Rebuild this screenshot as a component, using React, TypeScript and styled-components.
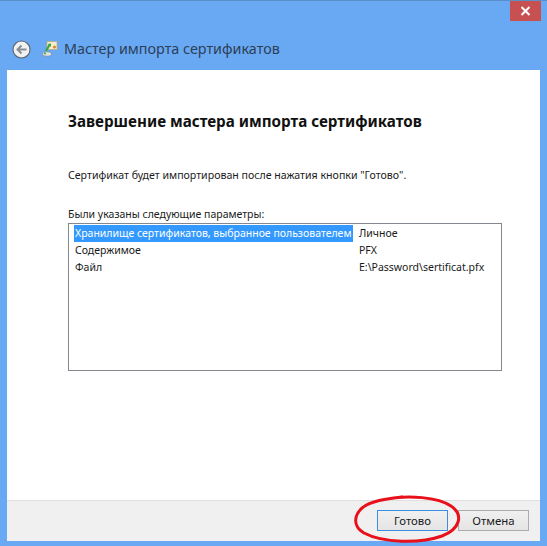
import styled, { createGlobalStyle } from "styled-components";

const GlobalStyle = createGlobalStyle`
  html, body {
    margin: 0;
    padding: 0;
    background: #69a9f4;
  }
`;

const Window = styled.div`
  position: relative;
  width: 547px;
  height: 546px;
  box-sizing: border-box;
  padding: 0 7px 5px 7px;
  background: #69a9f4;
  border-top: 1px solid #5b8fc9;
  display: flex;
  flex-direction: column;
  font-family: "Noto Sans", "Open Sans", sans-serif;
  overflow: hidden;
`;

const CloseBar = styled.div`
  display: flex;
  justify-content: flex-end;
  height: 20px;
  margin-right: -1px;
`;

const CloseButton = styled.div`
  width: 31px;
  height: 20px;
  background: #c75050;
  display: flex;
  align-items: center;
  justify-content: center;
`;

const TitleRow = styled.div`
  height: 49px;
  box-sizing: border-box;
  padding-top: 18px;
  padding-left: 5px;
  display: flex;
  align-items: flex-start;
`;

const BackButton = styled.div`
  width: 19px;
  height: 19px;
  margin-top: 1px;
  flex: none;
`;

const WizardIcon = styled.div`
  width: 16px;
  height: 16px;
  margin: 1px 0 0 11px;
  flex: none;
`;

const TitleText = styled.div`
  margin-left: 6px;
  font-size: 14.35px;
  line-height: 20px;
  color: #2c3e55;
`;

const Panel = styled.div`
  flex: 1;
  display: flex;
  flex-direction: column;
  background: #fff;
  min-height: 0;
`;

const Body = styled.div`
  flex: 1;
  padding: 41px 38px 0 61px;
  display: flex;
  flex-direction: column;
  color: #1a1a1a;
  font-size: 10.5px;
`;

const Heading = styled.h1`
  margin: 0;
  font-size: 15.2px;
  line-height: 20px;
  font-weight: 700;
  color: #111;
`;

const Note = styled.p`
  margin: 36px 0 0;
  font-size: 10.6px;
  line-height: 16px;
`;

const ParamsLabel = styled.div`
  margin-top: 24px;
  line-height: 15px;
`;

const ParamsBox = styled.div`
  margin-top: 1px;
  height: 148px;
  box-sizing: border-box;
  border: 1px solid #828790;
  padding: 1px 0 0 5px;
`;

const ParamRow = styled.div`
  display: flex;
  height: 17px;
  line-height: 17px;
  white-space: nowrap;
`;

const ParamName = styled.div<{ $selected?: boolean }>`
  width: 279px;
  box-sizing: border-box;
  padding-left: 1px;
  background: ${(p) => (p.$selected ? "#3399ff" : "transparent")};
  color: ${(p) => (p.$selected ? "#fff" : "#1a1a1a")};
`;

const ParamValue = styled.div`
  margin-left: 6px;
`;

const Footer = styled.div`
  height: 41px;
  box-sizing: border-box;
  background: #f0f0f0;
  border-top: 1px solid #dfdfdf;
  padding-top: 9px;
  padding-right: 11px;
  display: flex;
  justify-content: flex-end;
  gap: 10px;
`;

const Button = styled.div<{ $primary?: boolean }>`
  width: 71px;
  height: 21px;
  box-sizing: border-box;
  display: flex;
  align-items: center;
  justify-content: center;
  font-size: 11.4px;
  color: #1a1a1a;
  background: linear-gradient(#f0f0f0, #e5e5e5);
  border: 1px solid ${(p) => (p.$primary ? "#3c8fe0" : "#acacac")};
`;

const Ring = styled.svg`
  position: absolute;
  left: 353px;
  top: 493px;
`;

export default function App() {
  return (
    <Window>
      <GlobalStyle />
      <CloseBar>
        <CloseButton>
          <svg width="11" height="10" viewBox="0 0 11 10">
            <path d="M1.5 1 L9.5 9 M9.5 1 L1.5 9" stroke="#fff" strokeWidth="2" />
          </svg>
        </CloseButton>
      </CloseBar>
      <TitleRow>
        <BackButton>
          <svg width="19" height="19" viewBox="0 0 19 19">
            <circle cx="9.5" cy="9.5" r="8.5" fill="#f2f2f2" stroke="#5e6670" strokeWidth="1.2" />
            <path d="M14.5 9.5 H6 M9.5 5.5 L5.5 9.5 L9.5 13.5" fill="none" stroke="#8a8f96" strokeWidth="2" />
          </svg>
        </BackButton>
        <WizardIcon>
          <svg width="16" height="16" viewBox="0 0 16 16">
            <rect x="5" y="0.5" width="10" height="8" fill="#f4ecd0" stroke="#b9a878" strokeWidth="0.7" />
            <circle cx="12.5" cy="6" r="1.6" fill="#e08a20" />
            <path d="M4 10 L8 3" stroke="#3aa53a" strokeWidth="2.2" />
            <path d="M6 3 L9 2.5 L8.8 6 Z" fill="#3aa53a" />
            <ellipse cx="5" cy="13" rx="4.5" ry="2.2" fill="#dfe3e6" stroke="#7c8a92" strokeWidth="0.7" />
            <circle cx="3" cy="12.5" r="1" fill="#3aa53a" />
          </svg>
        </WizardIcon>
        <TitleText>Мастер импорта сертификатов</TitleText>
      </TitleRow>
      <Panel>
        <Body>
          <Heading>Завершение мастера импорта сертификатов</Heading>
          <Note>Сертификат будет импортирован после нажатия кнопки "Готово".</Note>
          <ParamsLabel>Были указаны следующие параметры:</ParamsLabel>
          <ParamsBox>
            <ParamRow>
              <ParamName $selected>Хранилище сертификатов, выбранное пользователем</ParamName>
              <ParamValue>Личное</ParamValue>
            </ParamRow>
            <ParamRow>
              <ParamName>Содержимое</ParamName>
              <ParamValue>PFX</ParamValue>
            </ParamRow>
            <ParamRow>
              <ParamName>Файл</ParamName>
              <ParamValue>E:\Password\sertificat.pfx</ParamValue>
            </ParamRow>
          </ParamsBox>
        </Body>
        <Footer>
          <Button $primary>Готово</Button>
          <Button>Отмена</Button>
        </Footer>
      </Panel>
      <Ring width="110" height="50" viewBox="0 0 110 50">
        <path
          d="M34 5 C55 1 85 3 98 12 C111 21 107 35 89 42 C66 50 30 49 11 39 C-3 31 1 14 21 8 C30 5 40 4 50 3"
          fill="none"
          stroke="#e8101a"
          strokeWidth="3"
        />
      </Ring>
    </Window>
  );
}
